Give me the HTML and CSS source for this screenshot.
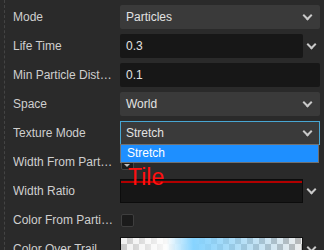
FILE: index.html
```html
<!DOCTYPE html>
<html lang="en">
<head>
  <meta charset="UTF-8" />
  <title>Trail Properties</title>
  <link rel="stylesheet" href="styles.css">
</head>
<body>
  <div class="panel">
    <div class="row">
      <div class="label">Mode</div>
      <div class="select"><span>Particles</span><i class="chev"></i></div>
    </div>
    <div class="row">
      <div class="label">Life Time</div>
      <div class="field">
        <div class="input">0.3</div>
        <i class="chev side"></i>
      </div>
    </div>
    <div class="row">
      <div class="label">Min Particle Distance</div>
      <div class="input">0.1</div>
    </div>
    <div class="row">
      <div class="label">Space</div>
      <div class="select"><span>World</span><i class="chev"></i></div>
    </div>
    <div class="row">
      <div class="label">Texture Mode</div>
      <div class="select open">
        <span>Stretch</span><i class="chev"></i>
        <div class="dropdown">
          <div class="option active">Stretch</div>
          <div class="option overflow">Tile</div>
        </div>
      </div>
    </div>
    <div class="row">
      <div class="label">Width From Particle</div>
      <div class="check small"></div>
    </div>
    <div class="row">
      <div class="label">Width Ratio</div>
      <div class="field">
        <div class="input curve"></div>
        <i class="chev side"></i>
      </div>
    </div>
    <div class="row">
      <div class="label">Color From Particle</div>
      <div class="check"></div>
    </div>
    <div class="row">
      <div class="label">Color Over Trail</div>
      <div class="field">
        <div class="gradient"></div>
        <i class="chev side"></i>
      </div>
    </div>
  </div>
</body>
</html>
```

FILE: styles.css
```css
body {
  margin: 0;
  background-color: #2a2a2a;
  font-family: 'Liberation Sans', Arial, sans-serif;
  font-size: 12px;
  height: 250px;
  overflow: hidden;
}

.panel {
  margin-left: 4px;
  padding: 5px 4px 0 8px;
  border-left: 1px dashed #444;
  display: flex;
  flex-direction: column;
  gap: 5px;
  min-height: 260px;
}

.row {
  display: flex;
  align-items: center;
  height: 24px;
}

.label {
  width: 101.5px;
  margin-right: 5.5px;
  flex-shrink: 0;
  color: #cfcfcf;
  white-space: nowrap;
  overflow: hidden;
  text-overflow: ellipsis;
}

.select,
.input {
  flex: 1;
  height: 24px;
  box-sizing: border-box;
  display: flex;
  align-items: center;
  padding-left: 6px;
  color: #e2e2e2;
  border-radius: 2px;
}

.select {
  position: relative;
  background-color: #3a3a3a;
  justify-content: space-between;
  padding-right: 9px;
}

.select.open {
  border: 1px solid #48a6d2;
  padding-left: 5px;
  padding-right: 8px;
  border-radius: 0;
}

.input {
  background-color: #171717;
}

.field {
  flex: 1;
  display: flex;
  align-items: center;
}

.chev {
  display: block;
  width: 5px;
  height: 5px;
  border-right: 2px solid #c9c9c9;
  border-bottom: 2px solid #c9c9c9;
  transform: rotate(45deg);
  margin-top: -4px;
}

.chev.side {
  margin: -4px 5px 0 5px;
}

.dropdown {
  position: absolute;
  top: 22px;
  left: -1px;
  width: 197px;
  border: 1px solid #707070;
  z-index: 2;
}

.option {
  height: 17px;
  line-height: 17px;
  padding-left: 6px;
  color: #fff;
}

.option.active {
  background-color: #1e8fff;
}

.option.overflow {
  position: absolute;
  top: 20px;
  left: 7px;
  padding: 0;
  color: #ff1010;
  font-size: 23px;
  line-height: 24px;
  height: 24px;
}

.check {
  width: 13px;
  height: 13px;
  box-sizing: border-box;
  margin-left: 1px;
  background-color: #1b1b1b;
  border: 1px solid #3e3e3e;
  border-radius: 2px;
}

.check.small {
  position: relative;
  margin-top: 2px;
  border-color: #444;
}

.check.small::after {
  content: "";
  position: absolute;
  left: 2px;
  bottom: 2px;
  border-left: 3px solid transparent;
  border-right: 3px solid transparent;
  border-top: 3px solid #bbb;
}

.input.curve {
  position: relative;
  border: 1px solid #0c0c0c;
  background-color: #161616;
  border-radius: 0;
}

.input.curve::before {
  content: "";
  position: absolute;
  left: 0;
  right: 0;
  top: 1px;
  height: 2px;
  background-color: #b10000;
}

.gradient {
  flex: 1;
  height: 24px;
  border: 1px solid #111;
  box-sizing: border-box;
  background-image:
    linear-gradient(to right, rgba(255, 255, 255, 0.2) 0%, rgba(255, 255, 255, 0.9) 25%, rgba(135, 212, 255, 1) 40%, rgba(135, 212, 255, 0.5) 70%, rgba(135, 212, 255, 0) 100%),
    linear-gradient(45deg, #b8b8b8 25%, transparent 25%, transparent 75%, #b8b8b8 75%),
    linear-gradient(45deg, #b8b8b8 25%, transparent 25%, transparent 75%, #b8b8b8 75%);
  background-color: #ededed;
  background-size: 100% 100%, 12px 12px, 12px 12px;
  background-position: 0 0, 0 0, 6px 6px;
}
```
